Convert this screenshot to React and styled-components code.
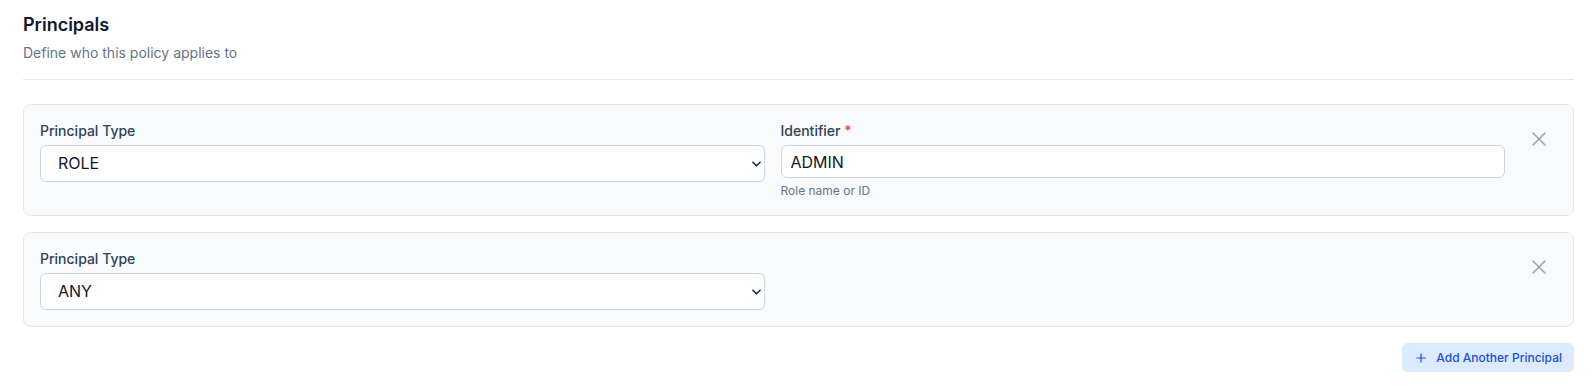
import React from 'react';
import styled, { createGlobalStyle } from 'styled-components';
import { X, Plus } from 'lucide-react';

const GlobalStyle = createGlobalStyle`
  * { box-sizing: border-box; }
  body {
    margin: 0;
    background: #ffffff;
    font-family: Inter, "Noto Sans", "Liberation Sans", sans-serif;
    color: #0f172a;
  }
`;

const principals = [
  { type: 'ROLE', identifier: 'ADMIN', hint: 'Role name or ID' },
  { type: 'ANY' },
];

const App = () => {
  return (
    <Page>
      <GlobalStyle />
      <Header>
        <Title>Principals</Title>
        <Subtitle>Define who this policy applies to</Subtitle>
      </Header>

      <List>
        {principals.map((p, i) => (
          <Card key={i}>
            <Fields>
              <Field>
                <Label>Principal Type</Label>
                <SelectWrap>
                  <Select defaultValue={p.type}>
                    <option value="ANY">ANY</option>
                    <option value="ROLE">ROLE</option>
                    <option value="USER">USER</option>
                  </Select>
                  <Chevron viewBox="0 0 10 6" aria-hidden="true">
                    <path d="M1 1l4 4 4-4" />
                  </Chevron>
                </SelectWrap>
              </Field>
              {p.identifier && (
                <Field>
                  <Label>
                    Identifier <Required>*</Required>
                  </Label>
                  <Input defaultValue={p.identifier} />
                  <Hint>{p.hint}</Hint>
                </Field>
              )}
            </Fields>
            <RemoveBtn type="button" aria-label="Remove principal">
              <X size={24} strokeWidth={1.5} />
            </RemoveBtn>
          </Card>
        ))}
      </List>

      <Actions>
        <AddBtn type="button">
          <Plus size={14} strokeWidth={2} />
          Add Another Principal
        </AddBtn>
      </Actions>
    </Page>
  );
};

const Page = styled.div`
  padding: 11px 21px 16px 23px;
`;

const Header = styled.div`
  padding-bottom: 16px;
  border-bottom: 1px solid #e2e8f0;
  margin-bottom: 24px;
`;

const Title = styled.h2`
  margin: 0 0 4px;
  font-size: 18px;
  line-height: 28px;
  font-weight: 600;
  color: #0f172a;
`;

const Subtitle = styled.p`
  margin: 0;
  font-size: 14px;
  line-height: 20px;
  color: #64748b;
`;

const List = styled.div`
  display: flex;
  flex-direction: column;
  gap: 16px;
`;

const Card = styled.div`
  display: flex;
  align-items: flex-start;
  gap: 16px;
  padding: 16px;
  background: #f8fafc;
  border: 1px solid #e2e8f0;
  border-radius: 8px;
`;

const Fields = styled.div`
  flex: 1;
  display: grid;
  grid-template-columns: 1fr 1fr;
  gap: 16px;
`;

const Field = styled.div`
  display: flex;
  flex-direction: column;
  min-width: 0;
`;

const Label = styled.label`
  font-size: 14px;
  line-height: 20px;
  font-weight: 500;
  color: #334155;
  margin-bottom: 4px;
`;

const Required = styled.span`
  color: #ef4444;
`;

const SelectWrap = styled.div`
  position: relative;
`;

const Select = styled.select`
  appearance: none;
  -webkit-appearance: none;
  width: 100%;
  height: 37px;
  padding: 8px 32px 8px 17px;
  font-family: inherit;
  font-size: 16px;
  line-height: 19px;
  color: #0f172a;
  background: #ffffff;
  border: 1px solid #cbd5e1;
  border-radius: 6px;
  outline: none;
`;

const Chevron = styled.svg`
  position: absolute;
  right: 4px;
  top: 50%;
  width: 9px;
  height: 6px;
  margin-top: -3px;
  fill: none;
  stroke: #1e293b;
  stroke-width: 1.8;
  stroke-linecap: round;
  stroke-linejoin: round;
  pointer-events: none;
`;

const Input = styled.input`
  width: 100%;
  height: 33px;
  padding: 6px 9px;
  font-family: inherit;
  font-size: 16px;
  line-height: 19px;
  color: #0f172a;
  background: #ffffff;
  border: 1px solid #cbd5e1;
  border-radius: 6px;
  outline: none;
`;

const Hint = styled.span`
  margin-top: 5px;
  font-size: 12px;
  line-height: 16px;
  color: #64748b;
`;

const RemoveBtn = styled.button`
  display: flex;
  align-items: center;
  justify-content: center;
  width: 36px;
  height: 36px;
  padding: 6px;
  border: none;
  background: transparent;
  color: #94a3b8;
  border-radius: 6px;
  cursor: pointer;
  flex-shrink: 0;
`;

const Actions = styled.div`
  display: flex;
  justify-content: flex-end;
  margin-top: 16px;
`;

const AddBtn = styled.button`
  display: inline-flex;
  align-items: center;
  gap: 8px;
  padding: 6px 12px;
  font-family: inherit;
  font-size: 12px;
  line-height: 17px;
  font-weight: 500;
  color: #1d4ed8;
  background: #dbeafe;
  border: none;
  border-radius: 6px;
  cursor: pointer;
`;

export default App;
